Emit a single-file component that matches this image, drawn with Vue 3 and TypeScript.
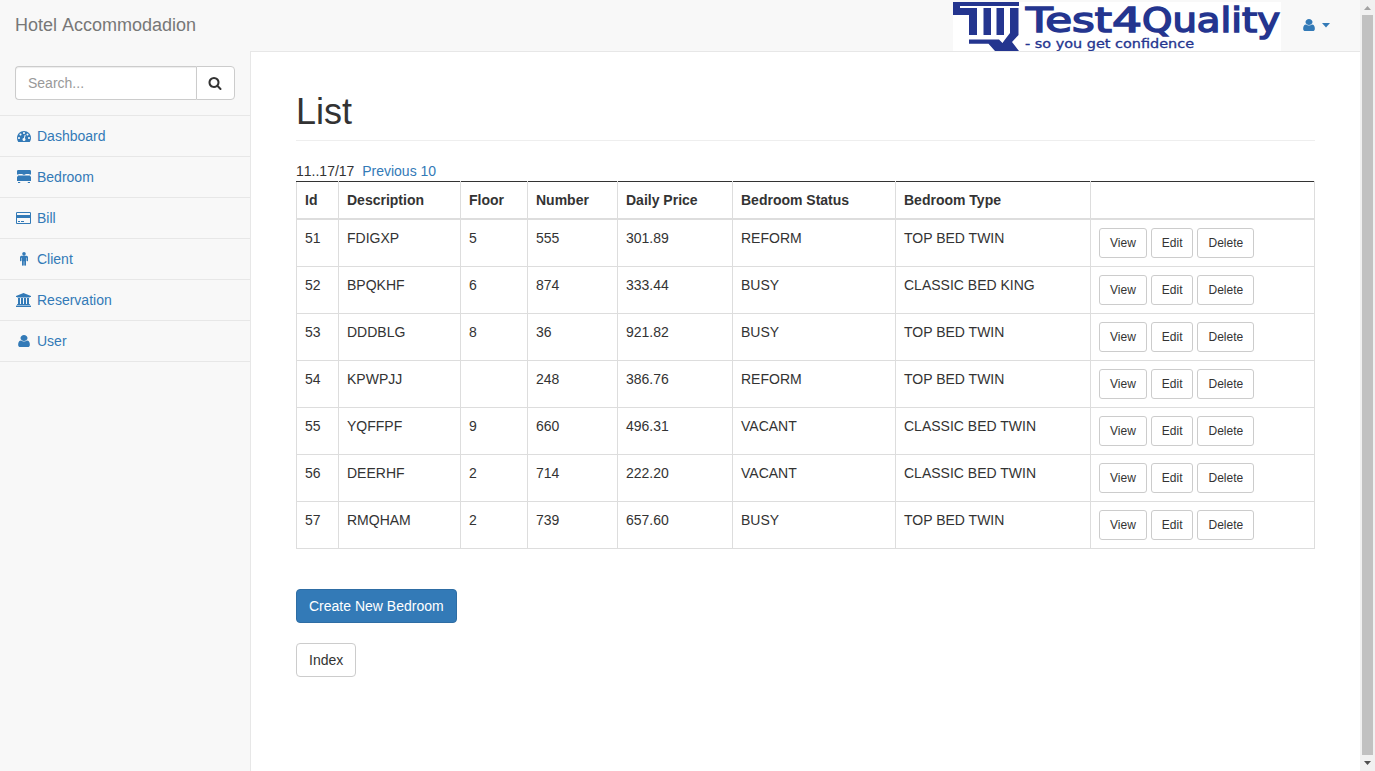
<script setup lang="ts">
interface NavItem { label: string; viewBox: string; width: number; path: string }
interface Room { id: number; description: string; floor: string; number: string; price: string; status: string; type: string }

const userPath = 'M1536 1399q0 109-62.5 187t-150.5 78h-854q-88 0-150.5-78t-62.5-187q0-85 8.5-160.5t31.5-152 58.5-131 94-89 134.5-34.5q131 128 313 128t313-128q76 0 134.5 34.5t94 89 58.5 131 31.5 152 8.5 160.5zm-256-887q0 159-112.5 271.5t-271.5 112.5-271.5-112.5-112.5-271.5 112.5-271.5 271.5-112.5 271.5 112.5 112.5 271.5z'

const navItems: NavItem[] = [
  { label: 'Dashboard', viewBox: '0 0 1792 1792', width: 14, path: 'M384 1152q0-53-37.5-90.5t-90.5-37.5-90.5 37.5-37.5 90.5 37.5 90.5 90.5 37.5 90.5-37.5 37.5-90.5zm192-448q0-53-37.5-90.5t-90.5-37.5-90.5 37.5-37.5 90.5 37.5 90.5 90.5 37.5 90.5-37.5 37.5-90.5zm428 481l101-382q6-26-7.5-48.5t-38.5-29.5-48 6.5-30 39.5l-101 382q-60 5-107 43.5t-63 98.5q-20 77 20 146t117 89 146-20 89-117q16-60-6-117t-72-91zm660-33q0-53-37.5-90.5t-90.5-37.5-90.5 37.5-37.5 90.5 37.5 90.5 90.5 37.5 90.5-37.5 37.5-90.5zm-640-640q0-53-37.5-90.5t-90.5-37.5-90.5 37.5-37.5 90.5 37.5 90.5 90.5 37.5 90.5-37.5 37.5-90.5zm448 192q0-53-37.5-90.5t-90.5-37.5-90.5 37.5-37.5 90.5 37.5 90.5 90.5 37.5 90.5-37.5 37.5-90.5zm320 448q0 261-141 483-19 29-54 29h-1402q-35 0-54-29-141-221-141-483 0-182 71-348t191-286 286-191 348-71 348 71 286 191 191 286 71 348z' },
  { label: 'Bedroom', viewBox: '0 0 14 14', width: 14, path: 'M1.3 0H12.7Q14 0 14 1.3V4.6H12.8Q12.6 4 12 4H9Q8.2 4 8 4.8H6Q5.8 4 5 4H2Q1.4 4 1.2 4.6H0V1.3Q0 0 1.3 0ZM1.2 5.6H12.8L14 7V11H0V7ZM1 12H3.2V13H1ZM10.8 12H13V13H10.8Z' },
  { label: 'Bill', viewBox: '0 0 1920 1792', width: 15, path: 'M1760 128q66 0 113 47t47 113v1216q0 66-47 113t-113 47h-1600q-66 0-113-47t-47-113v-1216q0-66 47-113t113-47h1600zm-1600 128q-13 0-22.5 9.5t-9.5 22.5v224h1664v-224q0-13-9.5-22.5t-22.5-9.5h-1600zm1600 1280q13 0 22.5-9.5t9.5-22.5v-608h-1664v608q0 13 9.5 22.5t22.5 9.5h1600zm-1504-128v-128h256v128h-256zm384 0v-128h384v128h-384z' },
  { label: 'Client', viewBox: '0 0 1792 1792', width: 14, path: 'M1408 672v416q0 40-28 68t-68 28-68-28-28-68v-352h-64v912q0 46-33 79t-79 33-79-33-33-79v-464h-64v464q0 46-33 79t-79 33-79-33-33-79v-912h-64v352q0 40-28 68t-68 28-68-28-28-68v-416q0-80 56-136t136-56h640q80 0 136 56t56 136zm-288-448q0 93-65.5 158.5t-158.5 65.5-158.5-65.5-65.5-158.5 65.5-158.5 158.5-65.5 158.5 65.5 65.5 158.5z' },
  { label: 'Reservation', viewBox: '0 0 1920 1792', width: 15, path: 'M960 0l960 384v128h-128q0 26-20.5 45t-48.5 19h-1526q-28 0-48.5-19t-20.5-45h-128v-128zm-704 640h256v768h128v-768h256v768h128v-768h256v768h128v-768h256v768h59q28 0 48.5 19t20.5 45v64h-1664v-64q0-26 20.5-45t48.5-19h59v-768zm1595 960q28 0 48.5 19t20.5 45v128h-1920v-128q0-26 20.5-45t48.5-19h1782z' },
  { label: 'User', viewBox: '128 0 1536 1792', width: 14, path: userPath },
]

const columns: string[] = ['Id', 'Description', 'Floor', 'Number', 'Daily Price', 'Bedroom Status', 'Bedroom Type', '']
const rooms: Room[] = [
  { id: 51, description: 'FDIGXP', floor: '5', number: '555', price: '301.89', status: 'REFORM', type: 'TOP BED TWIN' },
  { id: 52, description: 'BPQKHF', floor: '6', number: '874', price: '333.44', status: 'BUSY', type: 'CLASSIC BED KING' },
  { id: 53, description: 'DDDBLG', floor: '8', number: '36', price: '921.82', status: 'BUSY', type: 'TOP BED TWIN' },
  { id: 54, description: 'KPWPJJ', floor: '', number: '248', price: '386.76', status: 'REFORM', type: 'TOP BED TWIN' },
  { id: 55, description: 'YQFFPF', floor: '9', number: '660', price: '496.31', status: 'VACANT', type: 'CLASSIC BED TWIN' },
  { id: 56, description: 'DEERHF', floor: '2', number: '714', price: '222.20', status: 'VACANT', type: 'CLASSIC BED TWIN' },
  { id: 57, description: 'RMQHAM', floor: '2', number: '739', price: '657.60', status: 'BUSY', type: 'TOP BED TWIN' },
]
const actions: string[] = ['View', 'Edit', 'Delete']
</script>

<template>
  <div class="window">
    <div class="page">
      <header class="navbar">
        <a class="brand">Hotel Accommodadion</a>
        <div class="top-links">
          <svg class="logo" width="328" height="49" viewBox="953 2 328 49">
            <rect x="953" y="2" width="328" height="49" fill="#fff" />
            <g fill="#24358f">
              <path d="M953 2H1019V6H960V8H977V35H969V15H953Z" />
              <path d="M983.5 8H991V35H983.5ZM996.5 8H1004V35H996.5Z" />
              <path d="M1010 8H1018.5V35L1012 42L1019 51H995L988.5 43.7H969V39.5H999L1002.5 43L1005 39.5L1010 33Z" />
            </g>
            <text class="wordmark" y="32"><tspan x="1026" textLength="86" lengthAdjust="spacingAndGlyphs">Test</tspan><tspan x="1112" textLength="30" lengthAdjust="spacingAndGlyphs">4</tspan><tspan x="1142" textLength="138" lengthAdjust="spacingAndGlyphs">Quality</tspan></text>
            <text class="tagline" x="1025" y="48" textLength="169" lengthAdjust="spacingAndGlyphs">- so you get confidence</text>
          </svg>
          <a class="account">
            <span class="icon-box"><svg width="14" height="14" viewBox="128 0 1536 1792" preserveAspectRatio="none"><path :d="userPath" /></svg></span>
            <svg class="caret" width="8" height="5" viewBox="0 0 8 5"><path d="M0 0H8L4 4.5Z" /></svg>
          </a>
        </div>
      </header>
      <div class="body">
        <aside class="sidebar">
          <div class="search">
            <input type="text" placeholder="Search..." />
            <button class="search-btn" aria-label="Search">
              <svg width="14" height="14" viewBox="0 0 1792 1792"><path d="M1216 832q0-185-131.5-316.5t-316.5-131.5-316.5 131.5-131.5 316.5 131.5 316.5 316.5 131.5 316.5-131.5 131.5-316.5zm512 832q0 52-38 90t-90 38q-54 0-90-38l-343-342q-179 124-399 124-143 0-273.5-55.5t-225-150-150-225-55.5-273.5 55.5-273.5 150-225 225-150 273.5-55.5 273.5 55.5 225 150 150 225 55.5 273.5q0 220-124 399l343 343q37 37 37 90z" /></svg>
            </button>
          </div>
          <a v-for="item in navItems" :key="item.label" class="nav-item">
            <span class="icon-box" :class="{ wide: item.width === 15 }"><svg :width="item.width" height="14" :viewBox="item.viewBox" preserveAspectRatio="none"><path :d="item.path" /></svg></span>
            <span>{{ item.label }}</span>
          </a>
        </aside>
        <main class="content">
          <h1>List</h1>
          <div class="pager">11..17/17 &nbsp;<a>Previous 10</a></div>
          <table>
            <colgroup>
              <col class="c-id" /><col class="c-description" /><col class="c-floor" /><col class="c-number" />
              <col class="c-price" /><col class="c-status" /><col class="c-type" /><col class="c-actions" />
            </colgroup>
            <thead>
              <tr><th v-for="column in columns" :key="column">{{ column }}</th></tr>
            </thead>
            <tbody>
              <tr v-for="room in rooms" :key="room.id">
                <td>{{ room.id }}</td>
                <td>{{ room.description }}</td>
                <td>{{ room.floor }}</td>
                <td>{{ room.number }}</td>
                <td>{{ room.price }}</td>
                <td>{{ room.status }}</td>
                <td>{{ room.type }}</td>
                <td>
                  <div class="actions">
                    <button v-for="action in actions" :key="action" class="btn small">{{ action }}</button>
                  </div>
                </td>
              </tr>
            </tbody>
          </table>
          <div class="footer-actions">
            <button class="btn primary">Create New Bedroom</button>
            <button class="btn">Index</button>
          </div>
        </main>
      </div>
    </div>
    <div class="scrollbar">
      <svg width="15" height="15" viewBox="0 0 15 15"><path fill="#a3a3a3" d="M4 10H11L7.5 6Z" /></svg>
      <div class="thumb"></div>
      <svg width="15" height="16" viewBox="0 0 15 16"><path fill="#505050" d="M4 6H11L7.5 10Z" /></svg>
    </div>
  </div>
</template>

<style>
body { margin: 0; overflow: hidden; }
</style>

<style scoped>
* { box-sizing: border-box; }
.window { display: flex; width: 100vw; height: 100vh; font: 14px/20px "Liberation Sans", Arial, sans-serif; color: #333; background: #f8f8f8; }
.page { flex: 1; min-width: 0; display: flex; flex-direction: column; }
.navbar { display: flex; justify-content: space-between; height: 51px; }
.brand { padding: 15px; font-size: 18px; color: #777; font-kerning: none; }
.top-links { display: flex; align-items: flex-start; padding-right: 15px; }
.logo { display: block; margin-top: 2px; overflow: visible; }
.wordmark { font: 33px "DejaVu Sans", sans-serif; fill: #24358f; stroke: #24358f; stroke-width: 1.5px; }
.tagline { font: 12px "DejaVu Sans", sans-serif; fill: #24358f; stroke: #24358f; stroke-width: .3px; }
.account { display: flex; align-items: center; gap: 4px; height: 50px; padding: 0 15px 0 19px; }
svg { display: block; flex: none; }
.account svg, .nav-item svg { fill: #337ab7; }
.icon-box { display: flex; justify-content: center; width: 18px; }
.icon-box.wide { justify-content: flex-start; padding-left: 1px; }
.body { flex: 1; display: flex; }
.sidebar { width: 250px; }
.search { display: flex; padding: 15px; height: 65px; border-bottom: 1px solid #e7e7e7; }
.search input { flex: 1; min-width: 0; height: 34px; padding: 6px 12px; border: 1px solid #ccc; border-right: 0; border-radius: 4px 0 0 4px; font: inherit; box-shadow: inset 0 1px 1px rgba(0, 0, 0, .075); outline: 0; }
.search input::placeholder { color: #999; opacity: 1; }
.search-btn { display: flex; align-items: center; justify-content: center; width: 39px; height: 34px; padding: 0 1px 0 0; border: 1px solid #ccc; border-radius: 0 4px 4px 0; background: #fff; }
.search-btn svg { fill: #333; }
.nav-item { display: flex; align-items: center; gap: 4px; height: 41px; padding: 0 15px; border-bottom: 1px solid #e7e7e7; color: #337ab7; }
.content { flex: 1; padding: 0 45px; background: #fff; border-left: 1px solid #e7e7e7; border-top: 1px solid #e7e7e7; }
h1 { margin: 40px 0 20px; padding-bottom: 8px; border-bottom: 1px solid #eee; font-size: 36px; font-weight: 500; line-height: 40px; }
.pager { font-kerning: none; }
.pager a { color: #337ab7; }
table { width: 1019px; table-layout: fixed; border-collapse: collapse; margin-bottom: 40px; }
th, td { padding: 8px; border: 1px solid #ddd; text-align: left; vertical-align: top; }
th { border-top-color: #333; border-bottom-width: 2px; }
.c-id { width: 42px; } .c-description { width: 122px; } .c-floor { width: 67px; } .c-number { width: 90px; }
.c-price { width: 115px; } .c-status { width: 163px; } .c-type { width: 195px; } .c-actions { width: 224px; }
.actions { display: flex; gap: 4px; }
.btn { height: 34px; padding: 6px 12px; border: 1px solid #ccc; border-radius: 4px; background: #fff; color: #333; font: inherit; }
.btn.small { height: 30px; padding: 5px 10px; border-radius: 3px; font-size: 12px; line-height: 18px; }
.btn.primary { background: #337ab7; border-color: #2e6da4; color: #fff; }
.footer-actions { display: flex; flex-direction: column; align-items: flex-start; gap: 20px; }
.scrollbar { display: flex; flex-direction: column; width: 15px; background: #f1f1f1; }
.thumb { flex: 1; margin: 0 2px; background: #c1c1c1; }
</style>
